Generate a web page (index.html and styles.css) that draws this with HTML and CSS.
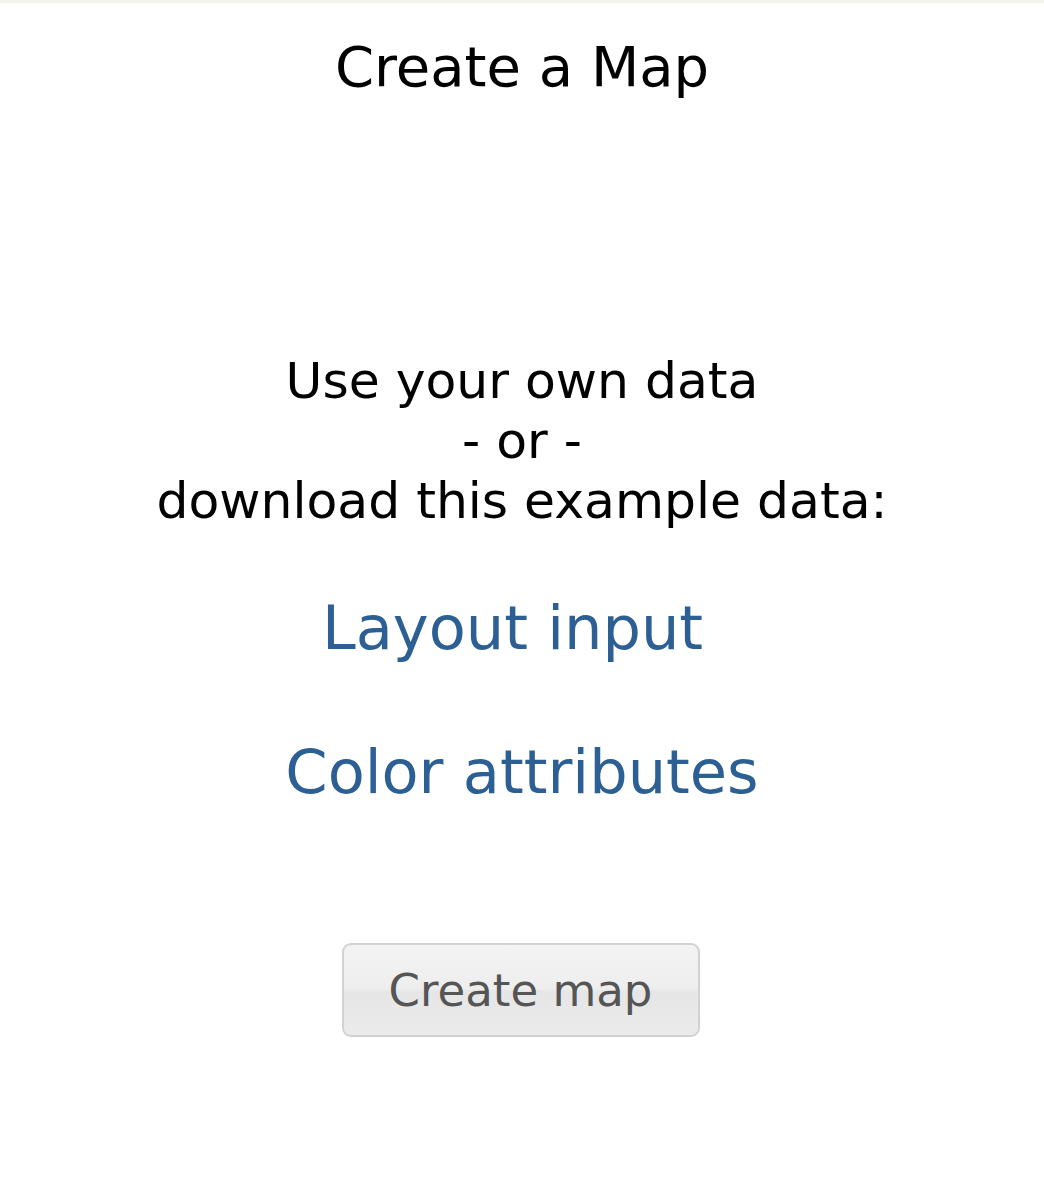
FILE: index.html
```html
<!DOCTYPE html>
<html lang="en">
<head>
<meta charset="utf-8">
<title>Create a Map</title>
<link rel="stylesheet" href="styles.css">
</head>
<body>
<div class="topbar"></div>
<main class="page">
  <h1 class="title">Create a Map</h1>
  <p class="intro">Use your own data<br>- or -<br>download this example data:</p>
  <a class="data-link first" href="#">Layout input</a>
  <a class="data-link second" href="#">Color attributes</a>
  <button class="create-btn" type="button">Create map</button>
</main>
</body>
</html>
```
FILE: styles.css
```css
html, body {
  margin: 0;
  padding: 0;
  background: #ffffff;
}
body {
  font-family: "DejaVu Sans", Verdana, sans-serif;
  color: #000;
}
.topbar {
  height: 3px;
  background: #f3f3eb;
}
.page {
  display: flex;
  flex-direction: column;
  align-items: center;
  text-align: center;
}
.title {
  margin: 30px 0 0;
  font-size: 56px;
  line-height: 67px;
  font-weight: normal;
}
.intro {
  margin: 251px 0 0;
  font-size: 50.4px;
  line-height: 60px;
}
.data-link {
  display: block;
  font-size: 60.6px;
  line-height: 73px;
  color: #2c5f93;
  text-decoration: none;
}
.data-link.first {
  margin-top: 61px;
  padding-right: 19px;
}
.data-link.second { margin-top: 71px; }
.create-btn {
  margin-top: 134px;
  margin-right: 3px;
  width: 358px;
  height: 94px;
  box-sizing: border-box;
  border: 2px solid #d2d2d2;
  border-radius: 9px;
  background: linear-gradient(to bottom, #f3f3f3 0%, #eeeeee 48%, #e6e6e6 52%, #ebebeb 100%);
  font-family: "DejaVu Sans", Verdana, sans-serif;
  font-size: 45px;
  color: #555555;
  padding: 0;
}
```
